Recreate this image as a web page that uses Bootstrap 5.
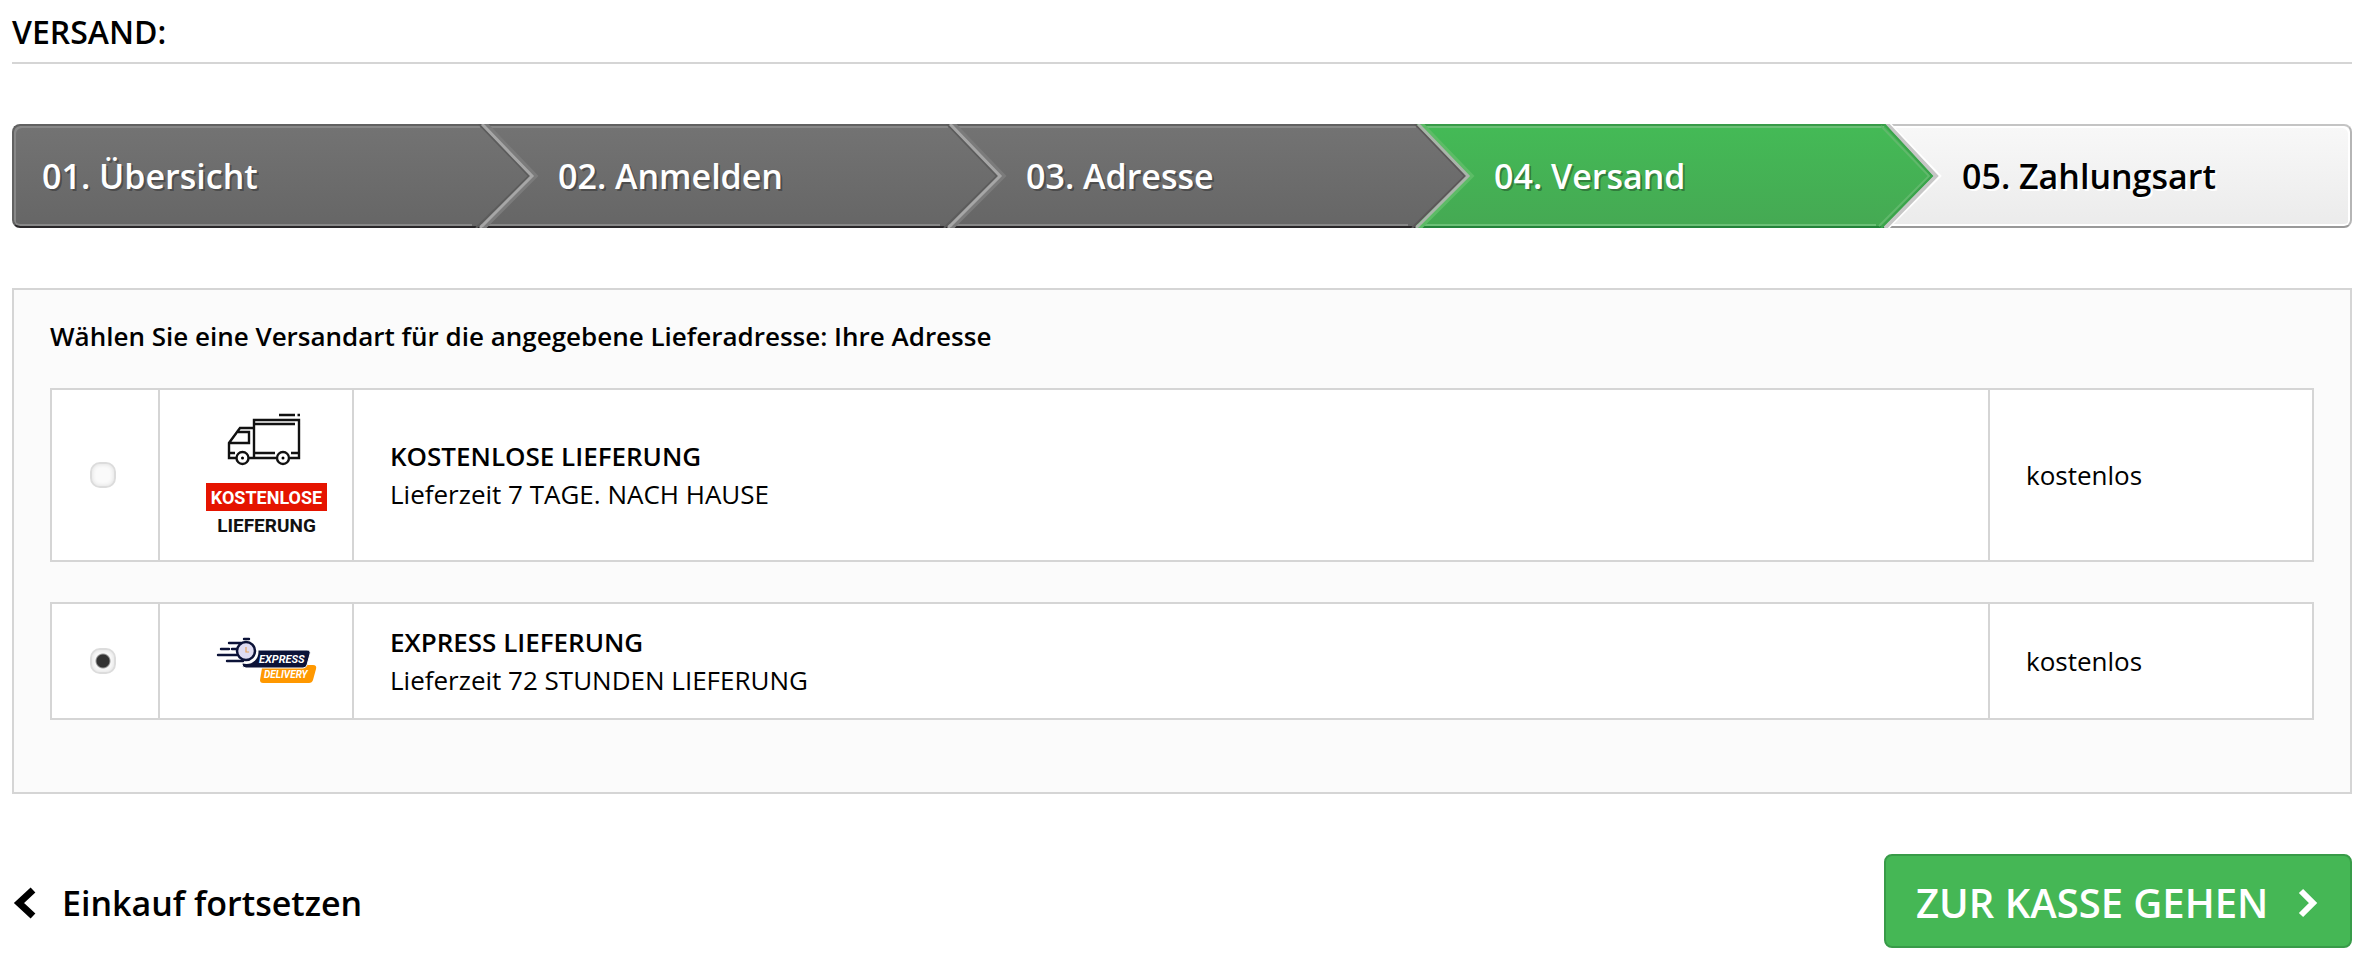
<!DOCTYPE html>
<html lang="de">
<head>
<meta charset="utf-8">
<meta name="viewport" content="width=device-width, initial-scale=1">
<title>Versand</title>
<link href="https://cdn.jsdelivr.net/npm/bootstrap@5.3.0/dist/css/bootstrap.min.css" rel="stylesheet">
<style>
body{font-family:"Open Sans","Noto Sans",sans-serif;font-size:26px;line-height:38px;color:#000;background:#fff}
.checkout{padding:8px 20px 12px 12px}
.page-title{font-size:32px;line-height:48px;font-weight:600;padding-bottom:6px;border-bottom:2px solid #d5d5d5;margin-bottom:60px}
.steps{margin-bottom:60px}
.step{flex:0 0 20%;position:relative;height:104px;padding-left:78px;font-size:34px;font-weight:600;border-top:2px solid var(--top);border-bottom:2px solid var(--bottom);box-shadow:inset 0 2px var(--inner),inset 0 -2px var(--inner);background:linear-gradient(var(--from),var(--to))}
.step:first-child{padding-left:28px;border-left:2px solid #616161;border-radius:8px 0 0 8px;box-shadow:inset 2px 2px #888,inset 0 -2px #888}
.step:last-child{border-right:2px solid #b5b5b5;border-radius:0 8px 8px 0;box-shadow:inset -2px 2px #fff,inset 0 -2px #fff}
.step a{color:#fff;text-decoration:none;text-shadow:2px 2px 0 rgba(0,0,0,.3)}
.step .tip{position:absolute;left:calc(100% - 8px);top:-2px;width:70px;height:104px;z-index:1;fill:none}
.step-done{--top:#616161;--bottom:#292729;--inner:#888;--from:#737373;--to:#666}
.step-active{--top:#389b48;--bottom:#23833a;--inner:#6cc077;--from:#44ba56;--to:#45a953}
.step-next{--top:#c4c4c4;--bottom:#999;--inner:#fff;--from:#f8f8f8;--to:#ebebeb}
.step-next a{color:#000;text-shadow:2px 2px 0 #fff}
.panel{border:2px solid #d5d5d5;background:#fbfbfb;padding:27px 36px 72px;margin-bottom:60px}
.panel-title{font-size:26px;line-height:38px;font-weight:600;margin-bottom:33px}
.option{border:2px solid #d5d5d5;background:#fff}
.option + .option{margin-top:40px}
.option > * + *{border-left:2px solid #d5d5d5}
.cell-radio{width:106px}
.cell-logo{width:194px;padding-left:20px}
.cell-price{width:324px;padding:0 36px}
.cell-text{padding:16px 36px}
.cell-text b{font-weight:600}
.logo-type{font-family:Roboto,sans-serif;font-weight:700}
.ship-radio{appearance:none;width:26px;height:26px;margin:0;border-radius:10px;border:2px solid #dcdcdc;background:#fafafa;box-shadow:inset 0 0 4px #ddd}
.ship-radio:checked{background:radial-gradient(circle,#333 6px,#fafafa 8px)}
.back-link{font-size:34px;font-weight:600;color:#000;text-decoration:none;gap:26px;padding-top:4px}
.btn-checkout{width:20%;min-width:468px;height:94px;font-size:40px;font-weight:600;color:#fff;background:#45b755;border:2px solid #389b48;border-radius:8px;padding:4px 30px 0}
.btn-checkout:hover{color:#fff;background:#3fa94e}
</style>
</head>
<body>
<main class="checkout">
<h1 class="page-title mt-0">VERSAND:</h1>
<svg width="0" height="0" class="position-absolute" aria-hidden="true"><defs>
<linearGradient id="grayFill" x2="0" y2="1"><stop stop-color="#737373"/><stop offset="1" stop-color="#666"/></linearGradient>
<linearGradient id="greenFill" x2="0" y2="1"><stop stop-color="#44ba56"/><stop offset="1" stop-color="#45a953"/></linearGradient>
</defs></svg>
<ol class="steps list-unstyled d-flex">
<li class="step step-done d-flex align-items-center"><a href="#">01. Übersicht</a>
<svg class="tip" viewBox="-8 0 70 104"><path d="M5 0L55 52L3 104" stroke="#7b7b7b" stroke-width="5"/><path d="M0 2H1L52 52L-1 102H-8V4H0Z" fill="url(#grayFill)"/><path d="M-1 0L49 52L-4 104" stroke="#5c5c5c" stroke-width="2"/><path d="M2 0L52 52L0 104" stroke="#a6a6a6" stroke-width="3"/></svg></li>
<li class="step step-done d-flex align-items-center"><a href="#">02. Anmelden</a>
<svg class="tip" viewBox="-8 0 70 104"><path d="M5 0L55 52L3 104" stroke="#7b7b7b" stroke-width="5"/><path d="M0 2H1L52 52L-1 102H-8V4H0Z" fill="url(#grayFill)"/><path d="M-1 0L49 52L-4 104" stroke="#5c5c5c" stroke-width="2"/><path d="M2 0L52 52L0 104" stroke="#a6a6a6" stroke-width="3"/></svg></li>
<li class="step step-done d-flex align-items-center"><a href="#">03. Adresse</a>
<svg class="tip" viewBox="-8 0 70 104"><path d="M5 0L55 52L3 104" stroke="#5cbc66" stroke-width="5"/><path d="M0 2H1L52 52L-1 102H-8V4H0Z" fill="url(#grayFill)"/><path d="M-1 0L49 52L-4 104" stroke="#5c5759" stroke-width="2"/><path d="M2 0L52 52L0 104" stroke="#a9b5aa" stroke-width="3"/></svg></li>
<li class="step step-active d-flex align-items-center" aria-current="step"><a href="#">04. Versand</a>
<svg class="tip" viewBox="-8 0 70 104"><path d="M5 0L55 52L3 104" stroke="#fff" stroke-width="4"/><path d="M3 0L52 52L1 104" stroke="#c6c6c6" stroke-width="4"/><path d="M0 0H1L49 52L-2 104V102H-8V4H0Z" fill="url(#greenFill)"/><path d="M-3 2L45 52L-5 102" stroke="#60b86b" stroke-width="2"/><path d="M0 0L48 52L-3 104" stroke="#3aa34b" stroke-width="2"/></svg></li>
<li class="step step-next d-flex align-items-center"><a href="#">05. Zahlungsart</a></li>
</ol>
<section class="panel">
<h2 class="panel-title mt-0">Wählen Sie eine Versandart für die angegebene Lieferadresse: Ihre Adresse</h2>
<div class="option d-flex">
<div class="cell-radio flex-shrink-0 d-flex align-items-center justify-content-center pe-1"><input class="ship-radio" type="radio" name="versand" id="v1" aria-label="Kostenlose Lieferung"></div>
<label for="v1" class="cell-logo flex-shrink-0 d-flex align-items-center justify-content-center">
<svg width="126" height="170" viewBox="0 -2 126 170" aria-hidden="true">
<g fill="none" stroke="#111" stroke-width="2.4"><path d="M51 65V28H96V66H87M73 66H46M33 66H26V51L37 36H50M26 51H46V40H35M26 61H32M51 61H72M88 61H96M51 32H92M76 23H92M94.500 23H97"/><circle cx="39.500" cy="66" r="6"/><circle cx="80" cy="66" r="6"/></g><circle cx="39.500" cy="66" r="1.500"/><circle cx="80" cy="66" r="1.500"/>
<path fill="#e51400" d="M3 91H124V119H3Z"/>
<text class="logo-type" x="63.500" y="112" text-anchor="middle" font-size="18" fill="#fff">KOSTENLOSE</text>
<text class="logo-type" x="63.500" y="140" text-anchor="middle" font-size="19" fill="#111">LIEFERUNG</text></svg></label>
<label for="v1" class="cell-text flex-grow-1 d-flex flex-column justify-content-center"><b>KOSTENLOSE LIEFERUNG</b><span>Lieferzeit 7 TAGE. NACH HAUSE</span></label>
<div class="cell-price flex-shrink-0 d-flex align-items-center">kostenlos</div>
</div>
<div class="option d-flex">
<div class="cell-radio flex-shrink-0 d-flex align-items-center justify-content-center pe-1"><input class="ship-radio" type="radio" name="versand" id="v2" aria-label="Express Lieferung" checked></div>
<label for="v2" class="cell-logo flex-shrink-0 d-flex align-items-center justify-content-center">
<svg width="126" height="114" viewBox="-1 -1 126 114" aria-hidden="true">
<path d="M61 60H109Q113 60 112 64L109 75Q108 78 105 78H59Q56 78 56 75L58 63Q59 60 61 60Z" fill="#ff9800"/>
<path d="M43 45H103Q107 45 106 49L103 60Q102 63 99 63H42Q38 63 38 59Z" fill="#0c1338" stroke="#fff" stroke-width="1"/>
<circle cx="42.500" cy="47" r="12" fill="#fff"/><circle cx="42" cy="46" r="9" fill="#dfdcf2" stroke="#0c1338" stroke-width="2.500"/>
<path d="M25 38H37M14 50H33M17 44H25M28 44H33M23 56H39M40 34H45" stroke="#0c1338" stroke-width="2.400" stroke-linecap="round"/>
<path d="M42 42V47H45" fill="none" stroke="#e8a35a" stroke-width="1.200"/>
<text class="logo-type" x="55" y="58" font-size="11" font-style="italic" fill="#fff">EXPRESS</text>
<text class="logo-type" x="60" y="73" font-size="10" font-style="italic" fill="#fff">DELIVERY</text></svg></label>
<label for="v2" class="cell-text flex-grow-1 d-flex flex-column justify-content-center"><b>EXPRESS LIEFERUNG</b><span>Lieferzeit 72 STUNDEN LIEFERUNG</span></label>
<div class="cell-price flex-shrink-0 d-flex align-items-center">kostenlos</div>
</div>
</section>
<div class="d-flex justify-content-between align-items-center">
<a href="#" class="back-link d-flex align-items-center"><svg width="24" height="32" viewBox="0 0 24 32" aria-hidden="true"><path d="M21 3L7 16L21 29" fill="none" stroke="#000" stroke-width="7"/></svg>Einkauf fortsetzen</a>
<button type="button" class="btn btn-checkout d-flex align-items-center justify-content-between text-nowrap">ZUR KASSE GEHEN<svg width="22" height="30" viewBox="0 0 22 30" aria-hidden="true"><path d="M3 3L15 15L3 27" fill="none" stroke="#fff" stroke-width="6"/></svg></button>
</div>
</main>
<script src="https://cdn.jsdelivr.net/npm/bootstrap@5.3.0/dist/js/bootstrap.bundle.min.js"></script>
</body>
</html>
